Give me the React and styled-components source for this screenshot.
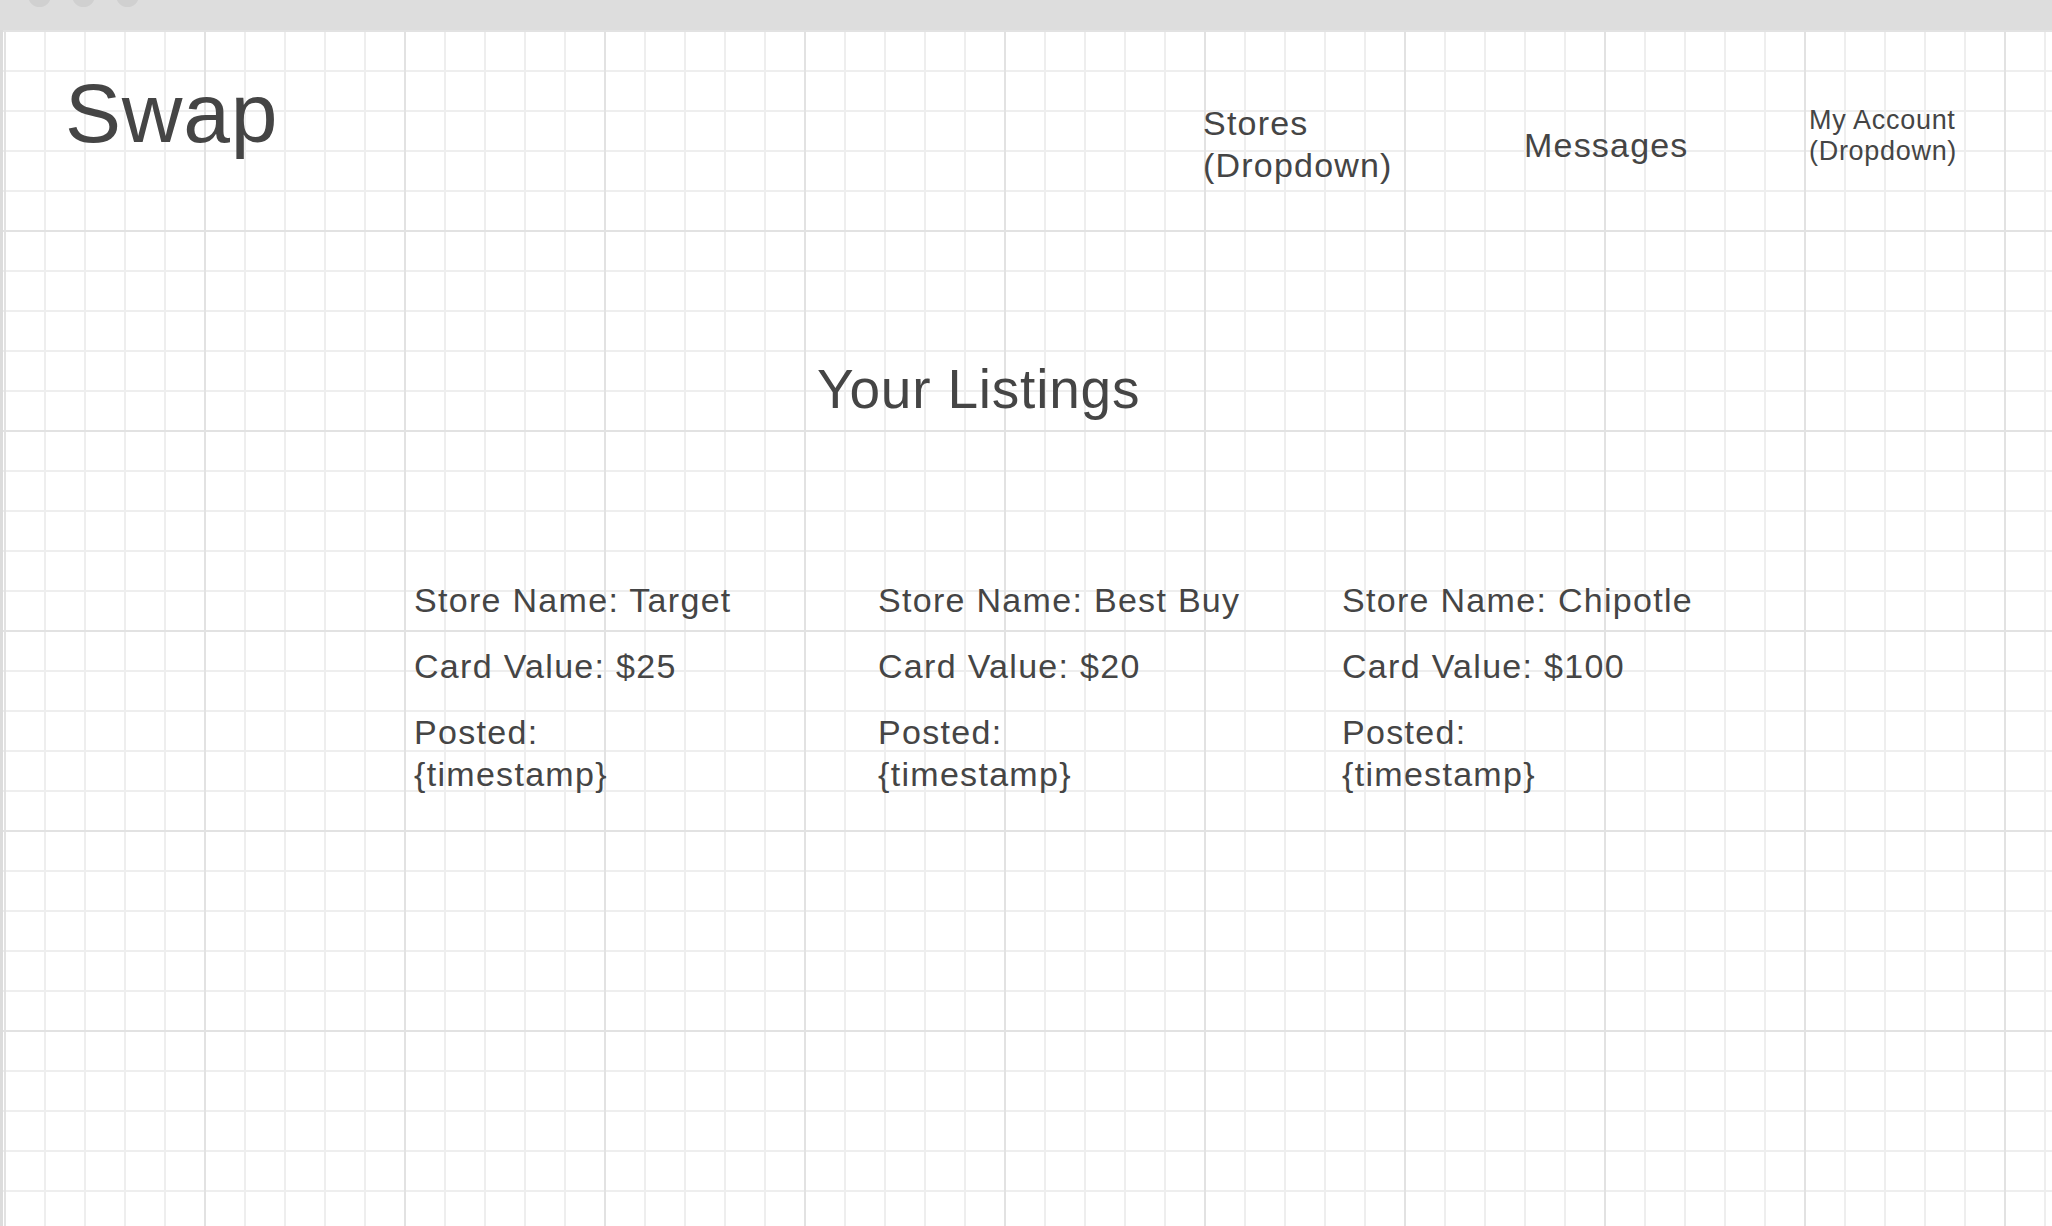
import React from 'react';
import styled, { createGlobalStyle } from 'styled-components';

const GlobalStyle = createGlobalStyle`
  html, body {
    margin: 0;
    padding: 0;
    background: #ffffff;
  }
  body {
    font-family: "Liberation Sans", Arial, sans-serif;
    color: #454545;
  }
`;

const listings = [
  { store: 'Target', value: '$25' },
  { store: 'Best Buy', value: '$20' },
  { store: 'Chipotle', value: '$100' },
];

const App = () => {
  return (
    <Window>
      <GlobalStyle />
      <TitleBar>
        <Light />
        <Light />
        <Light />
      </TitleBar>
      <Body>
        <LeftEdge />
        <Canvas>
          <Header>
            <Logo>Swap</Logo>
            <Nav>
              <NavItem>Stores<br />(Dropdown)</NavItem>
              <NavItem $offset={22}>Messages</NavItem>
              <NavItem $small>My Account<br />(Dropdown)</NavItem>
            </Nav>
          </Header>
          <Heading>Your Listings</Heading>
          <Cards>
            {listings.map((item) => (
              <Card key={item.store}>
                <Line>Store Name: {item.store}</Line>
                <Line>Card Value: {item.value}</Line>
                <Line>Posted:<br />{'{timestamp}'}</Line>
              </Card>
            ))}
          </Cards>
        </Canvas>
      </Body>
    </Window>
  );
};

export default App;

const Window = styled.div`
  display: flex;
  flex-direction: column;
  width: 2052px;
  height: 1226px;
  overflow: hidden;
`;

const TitleBar = styled.div`
  height: 30px;
  flex-shrink: 0;
  background: #dddddd;
  display: flex;
  align-items: flex-start;
  gap: 21px;
  padding-left: 28px;
  overflow: hidden;
`;

const Light = styled.span`
  width: 23px;
  height: 23px;
  border-radius: 50%;
  background: #d0d0d0;
  margin-top: -16px;
`;

const Body = styled.div`
  flex: 1;
  display: flex;
`;

const LeftEdge = styled.div`
  width: 3px;
  background: #dcdcdc;
`;

const Canvas = styled.div`
  flex: 1;
  background-color: #ffffff;
  background-image:
    linear-gradient(to right, #e2e2e2 2px, transparent 2px),
    linear-gradient(to bottom, #e2e2e2 2px, transparent 2px),
    linear-gradient(to right, #eeeeee 2px, transparent 2px),
    linear-gradient(to bottom, #eeeeee 2px, transparent 2px);
  background-size: 200px 200px, 200px 200px, 40px 40px, 40px 40px;
  background-position: 1px 0, 1px 0, 1px 0, 1px 0;
`;

const Header = styled.header`
  display: flex;
  align-items: flex-start;
  justify-content: space-between;
  box-sizing: border-box;
  height: 160px;
  padding: 42px 83px 0 62px;
`;

const Logo = styled.div`
  font-size: 84px;
  line-height: 83px;
  letter-spacing: 0.8px;
`;

const Nav = styled.nav`
  display: grid;
  grid-template-columns: 321px 285px 160px;
  align-items: start;
  margin-top: 30px;
`;

const NavItem = styled.div`
  font-size: ${(p) => (p.$small ? '27px' : '34px')};
  line-height: ${(p) => (p.$small ? '31px' : '42px')};
  letter-spacing: ${(p) => (p.$small ? '0.7px' : '1.2px')};
  margin-top: ${(p) => (p.$offset ? `${p.$offset}px` : p.$small ? '3px' : '0')};
  white-space: nowrap;
`;

const Heading = styled.h1`
  margin: 166px 0 0;
  padding-left: 814px;
  font-size: 55px;
  line-height: 66px;
  letter-spacing: 0.8px;
  font-weight: normal;
`;

const Cards = styled.section`
  display: grid;
  grid-template-columns: repeat(3, 464px);
  margin-top: 157px;
  padding-left: 411px;
`;

const Card = styled.div`
  display: flex;
  flex-direction: column;
  gap: 24px;
`;

const Line = styled.div`
  font-size: 34px;
  line-height: 42px;
  letter-spacing: 1.3px;
  white-space: nowrap;
`;
